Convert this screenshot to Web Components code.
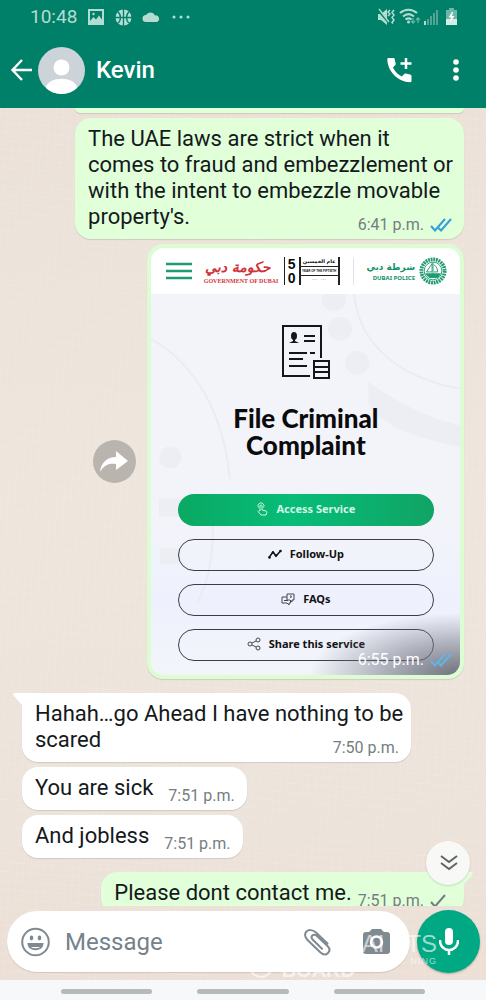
<!DOCTYPE html>
<html lang="en">
<head>
<meta charset="utf-8">
<meta name="viewport" content="width=device-width, initial-scale=1">
<title>Kevin</title>
<style>
  html, body { margin: 0; height: 100%; }
  body { font-family: Roboto, "Liberation Sans", sans-serif; background: #efe7de; }
</style>
</head>
<body>
<chat-app>
  <status-bar slot="top"></status-bar>
  <app-bar slot="top">Kevin</app-bar>
  <chat-bubble out stub></chat-bubble>
  <chat-bubble out long time="6:41 p.m." ticks="2">The UAE laws are strict when it comes to fraud and embezzlement or with the intent to embezzle movable property's.</chat-bubble>
  <photo-message time="6:55 p.m."><service-page></service-page></photo-message>
  <chat-bubble long tail first time="7:50 p.m.">Hahah…go Ahead I have nothing to be scared</chat-bubble>
  <chat-bubble time="7:51 p.m.">You are sick</chat-bubble>
  <chat-bubble time="7:51 p.m.">And jobless</chat-bubble>
  <chat-bubble out tail first time="7:51 p.m." ticks="1">Please dont contact me.</chat-bubble>
  <jump-button slot="float"></jump-button>
  <message-composer slot="bottom"></message-composer>
  <water-mark slot="mark"></water-mark>
  <nav-handles slot="nav"></nav-handles>
</chat-app>

<script>
const define = (name, html, setup) => {
  const t = document.createElement('template');
  t.innerHTML = html;
  customElements.define(name, class extends HTMLElement {
    constructor() {
      super();
      this.attachShadow({ mode: 'open' }).append(t.content.cloneNode(true));
    }
    connectedCallback() { if (setup) setup(this, this.shadowRoot); }
  });
};

define('chat-app', `
<style>
  :host { display: flex; flex-direction: column; height: 100vh; }
  .body { flex: 1; min-height: 0; display: flex; flex-direction: column; position: relative;
    background:
      repeating-linear-gradient(93deg, #ffffff14 0 1px, #ffffff00 1px 7px),
      repeating-linear-gradient(4deg, #ffffff18 0 1px, #ffffff00 1px 9px),
      linear-gradient(#ebe1d8, #eee6dc 45%, #ece4db 78%, #ecdfd5); }
  main { flex: 1; min-height: 0; overflow: hidden; display: flex; flex-direction: column; align-items: flex-start; gap: 5px; padding: 0 22px; }
</style>
<slot name="top"></slot>
<div class="body">
  <main><slot></slot></main>
  <slot name="float"></slot>
  <slot name="bottom"></slot>
  <slot name="mark"></slot>
</div>
<slot name="nav"></slot>`);

define('status-bar', `
<style>
  :host { display: flex; align-items: center; height: 34px; padding: 0 25px 0 30px; background: #008069; color: #b4dcd2; font-size: 19px; line-height: 34px; }
  .l, .r { display: flex; align-items: center; gap: 10px; }
  .l { flex: 1; }
  .r { gap: 4px; }
</style>
<div class="l"><span>10:48</span>
  <svg width="18" height="18" viewBox="0 0 18 18" fill="none" stroke="#b4dcd2" stroke-width="2"><rect x="2" y="2" width="14" height="14"/><path d="M3 13l3.500-4 2.500 2.500 3-4 4 5.500v2H3z" fill="#b4dcd2" stroke="none"/><circle cx="6.500" cy="6" r="1.200" fill="#b4dcd2" stroke="none"/></svg>
  <svg width="17" height="17" viewBox="0 0 17 17"><circle cx="8.500" cy="8.500" r="8" fill="#b4dcd2"/><path d="M8.500 0v17M0 8.500h17M2.500 2.500c4 3 4 9 0 12M14.500 2.500c-4 3-4 9 0 12" fill="none" stroke="#008069" stroke-width="1.300"/></svg>
  <svg width="18" height="12" viewBox="0 0 18 12"><path d="M4 11a3.500 3.500 0 0 1 0-7A5 5 0 0 1 13 4.500a3.300 3.300 0 0 1 1.500 6.500z" fill="#b4dcd2"/></svg>
  <svg width="26" height="6" viewBox="0 0 26 6" fill="#b4dcd2"><circle cx="4" cy="3" r="1.500"/><circle cx="11" cy="3" r="1.500"/><circle cx="18" cy="3" r="1.500"/></svg>
</div>
<div class="r">
  <svg width="18" height="18" viewBox="0 0 18 18"><path d="M1 6h3l6-5v16l-6-5H1z" fill="#b4dcd2"/><path d="M0 1l13 15" stroke="#008069" stroke-width="2"/><path d="M2 1l10 13" stroke="#b4dcd2" stroke-width="1.300"/><path d="M13 2l-2 2 2 2-2 2M17 2l-2 2.500 2 2.500-2 2.500 2 2.500-2 2.500 1 1" fill="none" stroke="#b4dcd2" stroke-width="1.500"/></svg>
  <svg width="21" height="18" viewBox="0 0 21 18"><g fill="none" stroke="#b4dcd2" stroke-width="2"><path d="M1 5c5-4.500 12-4.500 17 0M4 8.500c3.500-3 7.500-3 11 0M6.500 11.500c2-1.500 4-1.500 6 0"/></g><circle cx="9.500" cy="14" r="1.500" fill="#b4dcd2"/><path d="M14 10v5m-2-2l2 2 2-2M19 15v-5m-2 2l2-2 2 2" fill="none" stroke="#5fb3a3" stroke-width="1.300"/></svg>
  <svg width="15" height="18" viewBox="0 0 15 18" fill="#4da794"><path d="M0 13h2v4H0z" fill="#b4dcd2"/><path d="M3 11h2v6H3zM6 8h2v9H6zM9 5h2v12H9zM12 2h2v15h-2z"/></svg>
  <svg width="18" height="18" viewBox="0 0 18 18"><path d="M6 0h5v2h3v15H3V2h3z" fill="#6bb8aa"/><path d="M3 11h11v6H3z" fill="#d5ece7"/><path d="M9 4L5.500 9.500h2.500L7 14l4.500-6H9l1-4z" fill="#fff"/></svg>
</div>`);

define('app-bar', `
<style>
  :host { display: flex; align-items: center; height: 74px; padding: 0 24px 2px 10px; box-sizing: border-box; background: #008069; color: #fff; }
  button { border: 0; background: none; padding: 0; color: inherit; display: flex; }
  .av { margin: 0 11px 0 5px; }
  h1 { flex: 1; margin: 0; font-size: 24px; font-weight: 500; line-height: 30px; }
  .call { margin-right: 38px; }
</style>
<button aria-label="Back"><svg width="23" height="24" viewBox="0 0 23 24" fill="none" stroke="#fff" stroke-width="2.400"><path d="M22 12H3M12 2L2.500 12l9.500 10"/></svg></button>
<svg class="av" width="47" height="47" viewBox="0 0 47 47"><defs><clipPath id="c"><circle cx="23.500" cy="23.500" r="23.500"/></clipPath></defs><g clip-path="url(#c)"><path d="M0 0h47v47H0z" fill="#ccd3d9"/><g fill="#fff"><circle cx="23.500" cy="20.500" r="8"/><path d="M8 40c3-11 28-11 31 0v8H8z"/></g></g></svg>
<h1><slot></slot></h1>
<button class="call" aria-label="Add call"><svg width="25" height="26" viewBox="0 0 25 26"><path d="M1.500 1H6.200c1 0 1.500.500 1.600 1.300.200 1.600.400 2.900.9 4.200.2.600 0 1.100-.4 1.500L5.900 10.600c2.100 4.200 4.700 6.800 8.900 8.900l2.500-2.500c.4-.4 1-.500 1.500-.4 1.300.5 2.700.8 4.300.9.800.1 1.400.7 1.400 1.500V24c0 .700-.600 1.200-1.300 1.200C11 25.200.5 14.300.3 2.300.3 1.600.8 1 1.500 1z" fill="#fff"/><path d="M19 1v11M13.500 6.500h11" stroke="#fff" stroke-width="2.500"/></svg></button>
<button aria-label="More options"><svg width="12" height="24" viewBox="0 0 12 24" fill="#fff"><circle cx="6" cy="4" r="2.800"/><circle cx="6" cy="12" r="2.800"/><circle cx="6" cy="20" r="2.800"/></svg></button>`);

define('tick-marks', `
<style>:host { display: block; height: 16px; } svg { display: block; } :host([n="1"]) .b { display: none; }</style>
<svg width="22" height="16" viewBox="0 0 22 16" fill="none" stroke="currentColor" stroke-width="2"><path d="M1 9l4 4.500L15 2"/><path class="b" d="M8.500 11l2.500 2.500L21 2"/></svg>`);

define('chat-bubble', `
<style>
  :host { display: flex; flex: none; align-items: flex-end; gap: 15px; position: relative; isolation: isolate; box-sizing: border-box; max-width: 88%; padding: 8px 6px 4px 13px; border-radius: 16px; background: var(--bg); color: #14191c; font-size: 22px; line-height: 26px; box-shadow: 0 1px 1px #0000001f; --bg: #fff; }
  :host([out]) { align-self: flex-end; --bg: #e1ffd9; gap: 6px; }
  :host([long]) { display: grid; }
  :host([long]) .text, :host([long]) .meta { grid-area: 1 / 1; }
  :host([first]) { margin-top: 9px; }
  :host([stub]) { width: 100%; height: 5px; padding: 0; border-radius: 0 0 16px 16px; }
  :host([stub]) .meta { display: none; }
  .text { margin-bottom: 5px; }
  .meta { display: flex; align-items: center; justify-self: end; align-self: end; gap: 6px; margin-right: 6px; font-size: 16px; line-height: 20px; color: #757d80; white-space: nowrap; }
  tick-marks { color: #2f9fd6; }
  tick-marks[n="1"] { color: #757d80; }
  .tail { position: absolute; z-index: -1; top: 0; left: -9px; display: none; fill: var(--bg); }
  :host([out]) .tail { left: auto; right: -9px; transform: scaleX(-1); }
  :host([tail]) .tail { display: block; }
</style>
<svg class="tail" width="26" height="18" viewBox="0 0 26 18"><path d="M2 0h24v18H9V12L1 3Q-1 0 2 0z"/></svg>
<div class="text"><slot></slot></div>
<div class="meta"><span></span></div>`, (el, root) => {
  root.querySelector('.meta span').textContent = el.getAttribute('time') || '';
  const n = el.getAttribute('ticks');
  if (n) {
    const t = document.createElement('tick-marks');
    t.setAttribute('n', n);
    root.querySelector('.meta').append(t);
  }
});

define('photo-message', `
<style>
  :host { display: flex; flex: none; align-self: flex-end; align-items: center; gap: 11px; width: 84%; }
  button { flex: none; display: flex; align-items: center; justify-content: center; width: 43px; height: 43px; padding: 0; border: 0; border-radius: 50%; background: #b9b4ae; }
  .card { flex: 1; min-width: 0; position: relative; padding: 4px; border-radius: 16px; background: #dcfdd2; box-shadow: 0 1px 1px #0000001f; }
  .pic { border-radius: 13px; overflow: hidden; position: relative; }
  .shade { position: absolute; inset: 0; background: radial-gradient(ellipse 150px 62px at 100% 100%, #5c606ce0, #777b8890 50%, #77778800); }
  .meta { position: absolute; right: 12px; bottom: 9px; display: flex; align-items: center; gap: 6px; font-size: 16px; line-height: 20px; color: #fff; }
  tick-marks { color: #62b4e4; }
</style>
<button aria-label="Forward"><svg width="28" height="22" viewBox="0 0 28 22"><path d="M16 6V0l12 10-12 9v-6C9 12 4 14 0 21 1 12 7 6 16 6z" fill="#fff"/></svg></button>
<div class="card"><div class="pic"><slot></slot><div class="shade"></div></div>
<div class="meta"><span></span><tick-marks n="2"></tick-marks></div></div>`, (el, root) => {
  root.querySelector('.meta span').textContent = el.getAttribute('time');
});

define('pill-button', `
<style>
  :host { display: block; }
  button { display: flex; align-items: center; justify-content: center; gap: 8px; width: 100%; height: 32px; box-sizing: border-box; padding: 0 0 2px; border: 1px solid #3c3d48; border-radius: 16px; background: none; color: #111; font: 700 11px/16px "Noto Sans", sans-serif; }
  :host([primary]) button { border-color: transparent; color: #d3f7e5; background: linear-gradient(90deg, #0aa863, #07bd78 45%, #10a465) border-box; }
</style>
<button><slot name="icon"></slot><slot></slot></button>`);

define('service-page', `
<style>
  :host { display: block; background: #f2f4f9; color: #0b0b0d; }
  header { display: flex; align-items: center; height: 46px; padding: 0 13px 0 15px; background: #fff; }
  header > svg, header > div { flex: none; }
  .menu { border: 0; background: none; padding: 0; display: flex; flex: none; margin-right: 12px; }
  .gov { width: 68px; text-align: center; color: #d13238; margin-right: 12px; }
  .gov b { display: block; font: italic 700 14px/20px "DejaVu Sans", sans-serif; white-space: nowrap; }
  .gov span { display: block; font: 700 6px/8px "Liberation Serif", serif; white-space: nowrap; }
  .fifty { display: flex; width: 56px; height: 28px; }
  .num { border: solid #222; border-width: 0 2px 0 1px; padding: 0 3px; font: 700 14px/14px "Liberation Sans", sans-serif; }
  .num span { display: block; }
  .year { flex: 1; border-right: 2px solid #222; text-align: center; font: 700 3px/8px "Liberation Sans", sans-serif; white-space: nowrap; }
  .year b { display: block; font: 700 5px/9px "DejaVu Sans", sans-serif; border-bottom: 1px solid #222; }
  .year i { display: block; font-style: normal; border-bottom: 1px solid #222; }
  hr { width: 1px; height: 27px; border: 0; margin: 0 11px 0 13px; background: #e3e3e6; }
  .pol { flex: 1 !important; text-align: right; color: #109466; margin-right: 4px; }
  .pol b { display: block; font: 700 9px/14px "DejaVu Sans", sans-serif; white-space: nowrap; }
  .pol span { display: block; font: 700 6px/8px "Noto Sans", sans-serif; white-space: nowrap; }
  section { position: relative; padding: 31px 26px 14px 27px; background: linear-gradient(#f2f4f9, #f3f4fa 60%, #eef1fd 80%, #f3f5fb); }
  .deco { position: absolute; inset: 0; width: 100%; height: 100%; }
  .doc { position: relative; display: block; margin: 0 auto 25px; }
  h2 { position: relative; margin: 0 0 35px; text-align: center; font: 900 26px/27px Lato, sans-serif; }
  .list { position: relative; display: grid; gap: 13px; }
</style>
<header>
  <button class="menu" aria-label="Menu"><svg width="26" height="18" viewBox="0 0 26 18" stroke="#209b70" stroke-width="2.400"><path d="M0 2h26M0 9h26M0 16h26"/></svg></button>
  <div class="gov"><b lang="ar" dir="rtl">حكومة دبي</b><span>GOVERNMENT OF DUBAI</span></div>
  <div class="fifty"><div class="num"><span>5</span><span>0</span></div><div class="year"><b lang="ar" dir="rtl">عام الخمسين</b><i>YEAR OF THE FIFTIETH</i>· · · &nbsp; &nbsp; · · ·</div></div>
  <hr>
  <div class="pol"><b lang="ar" dir="rtl">شرطة دبي</b><span>DUBAI POLICE</span></div>
  <svg width="28" height="28" viewBox="0 0 30 30" fill="none" stroke="#219a70"><circle cx="15" cy="15" r="12.500" stroke-width="4" stroke-dasharray="2 .800"/><circle cx="15" cy="15" r="9.500" stroke-width="1"/><path d="M15 6v12M14 7l-6 9h6zM16 8c3 3 4 5 4 8h-4" stroke-width="1"/><path d="M7 18h16l-3 4h-9z" fill="#219a70"/></svg>
</header>
<section>
  <svg class="deco" viewBox="0 0 306 382" preserveAspectRatio="none" fill="none">
    <g fill="#eceef3"><circle cx="181" cy="5" r="12"/><circle cx="187" cy="35" r="12"/><circle cx="204" cy="69" r="12"/><circle cx="19" cy="164" r="11"/><path d="M8 205h22v18H8zM9 255h20v16H9zM215 88c20 14 43 31 91 44v22c-48-12-75-20-91-44z"/></g>
    <path d="M201 0c5 55 50 85 105 95M0 45c44 25 72 75 78 140M60 215c4 40-2 70-14 95" stroke="#eaecf1" stroke-width="2"/>
  </svg>
  <svg class="doc" width="48" height="55" viewBox="0 0 48 55" fill="none" stroke="#15161a" stroke-width="2"><path d="M28 51H1V1h38v32"/><path d="M32 36h15v17H32zM32 42h15M32 47h15"/><path d="M22 11h11M22 16h11M7 28h18M28 28h5M7 34h14M7 41h18"/><g fill="#15161a" stroke="none"><ellipse cx="12" cy="11" rx="3" ry="4"/><path d="M11 13h2v3l4 2H7l4-2z"/></g></svg>
  <h2>File Criminal<br>Complaint</h2>
  <div class="list">
    <pill-button primary><svg slot="icon" width="12" height="14" viewBox="0 0 12 14" fill="none" stroke="#d3f7e5"><path d="M4 9V4a1 1 0 0 1 2 0v4l4 1c1 .400 1 1 .700 2L10 13H5L2 9.500l1-1zM2.500 5.500a3 3 0 1 1 5 0"/></svg>Access Service</pill-button>
    <pill-button><svg slot="icon" width="14" height="10" viewBox="0 0 14 10" fill="none" stroke="#111" stroke-width="1.500"><path d="M1 8.500L5 3l3 4 4.500-5"/><g fill="#111" stroke="none"><circle cx="1.500" cy="8.500" r="1.300"/><circle cx="5" cy="3.500" r="1.300"/><circle cx="8" cy="6.500" r="1.300"/><circle cx="12.500" cy="2" r="1.300"/></g></svg>Follow-Up</pill-button>
    <pill-button><svg slot="icon" width="14" height="13" viewBox="0 0 14 13" fill="none" stroke="#44454f"><path d="M6 1h7v6h-2v2L9 7H6zM6 4H1v6h5l2 2v-2h1.500V7M9 3h1.500L9.500 5M3 7.500h4"/></svg>FAQs</pill-button>
    <pill-button><svg slot="icon" width="14" height="14" viewBox="0 0 14 14" fill="none" stroke="#44454f"><circle cx="3" cy="7" r="2"/><circle cx="11" cy="3" r="2"/><circle cx="11" cy="11" r="2"/><path d="M5 6l4-2M5 8l4 2"/></svg>Share this service</pill-button>
  </div>
</section>`);

define('jump-button', `
<style>
  :host { position: absolute; right: 16px; bottom: 95px; }
  button { display: flex; align-items: center; justify-content: center; width: 44px; height: 44px; padding: 0 0 0 1px; border: 0; border-radius: 50%; background: #f8f8f6; box-shadow: 0 1px 2px #00000026; }
</style>
<button aria-label="Scroll to bottom"><svg width="18" height="16" viewBox="0 0 18 16" fill="none" stroke="#5c666b" stroke-width="2"><path d="M1 1l8 6 8-6M1 8l8 6 8-6"/></svg></button>`);

define('message-composer', `
<style>
  :host { display: flex; align-items: center; gap: 7px; padding: 4px 6px 7px 7px; }
  .field { flex: 1; min-width: 0; display: flex; align-items: center; height: 61px; box-sizing: border-box; padding: 0 20px 0 13px; border-radius: 31px; background: #fff; box-shadow: 0 1px 1px #0000001f; }
  input { flex: 1; min-width: 0; border: 0; outline: 0; background: none; padding: 0; margin: 0 14px; font: 24px/30px Roboto, sans-serif; color: #14191c; }
  input::placeholder { color: #76818a; opacity: 1; }
  button { border: 0; background: none; padding: 0; display: flex; flex: none; align-items: center; justify-content: center; }
  .clip { margin-right: 31px; }
  .mic { width: 63px; height: 63px; border-radius: 50%; background: #00a884; box-shadow: 0 1px 2px #00000040; }
</style>
<div class="field">
  <button aria-label="Emoji"><svg width="31" height="30" viewBox="0 0 31 30" fill="none" stroke="#808a91" stroke-width="2"><circle cx="15.500" cy="15" r="13.300"/><g fill="#808a91" stroke="none"><ellipse cx="11.500" cy="11" rx="1.800" ry="2.400"/><ellipse cx="19.500" cy="11" rx="1.800" ry="2.400"/></g><path d="M8.500 17h14c-.500 7-13.500 7-14 0zM9.500 19h12"/></svg></button>
  <input type="text" placeholder="Message" aria-label="Message">
  <button class="clip" aria-label="Attach"><svg width="29" height="28" viewBox="0 0 29 28"><path d="M24.500 15.500L13 4.500C9.500 1.500 5.500 1.500 3.500 3.500s-2 5.500 1 8.500l13 12.500c2.500 2.300 5.500 2.500 7.500.500s2-4.500-.500-7L14 8c-1.500-1.500-3.500-1.800-4.700-.500s-1 2.800.500 4.300l9.200 9" fill="none" stroke="#808a91" stroke-width="2" stroke-linecap="round"/></svg></button>
  <button aria-label="Camera"><svg width="27" height="25" viewBox="0 0 27 25"><path d="M9 0h9l3 3h3a3 3 0 0 1 3 3v16a3 3 0 0 1-3 3H3a3 3 0 0 1-3-3V6a3 3 0 0 1 3-3h3z" fill="#808a91"/><circle cx="13.500" cy="13" r="5.500" fill="none" stroke="#fff" stroke-width="2.500"/></svg></button>
</div>
<button class="mic" aria-label="Record voice message"><svg width="20" height="28" viewBox="0 0 20 28"><rect x="6" y="0" width="8" height="17" rx="4" fill="#fff"/><path d="M1 12v1a9 9 0 0 0 18 0v-1M10 22v5" fill="none" stroke="#fff" stroke-width="2.500"/></svg></button>`);

/* faint overprint that lies across the composer */
define('water-mark', `
<style>
  :host { position: absolute; right: 49px; bottom: 0; display: grid; justify-items: end; color: #fff; opacity: .6; pointer-events: none; font-family: "Liberation Sans", sans-serif; }
  .a { display: flex; gap: 22px; font-size: 24px; line-height: 24px; }
  .b { font-size: 9px; line-height: 11px; letter-spacing: 1px; }
  .c { display: flex; align-items: center; gap: 9px; margin: -7px 82px 0 0; font-weight: 700; font-size: 20px; line-height: 20px; }
</style>
<div class="a"><span>AI</span><span>TS</span></div>
<div class="b">NING</div>
<div class="c"><svg width="24" height="20" viewBox="0 0 24 20" fill="none" stroke="#fff" stroke-width="2"><path d="M1 6a11 11 0 0 0 22 0M7 6c2 7 8 7 10 0"/></svg><span>BOARD</span></div>`);

define('nav-handles', `
<style>
  :host { display: flex; align-items: center; justify-content: space-between; gap: 45px; height: 20px; padding: 3px 61px 0; box-sizing: border-box; background: #f6f8fa; }
  i { flex: 1; height: 5px; border-radius: 3px; background: #b6babb; }
</style>
<i></i><i></i><i></i>`);
</script>
</body>
</html>
